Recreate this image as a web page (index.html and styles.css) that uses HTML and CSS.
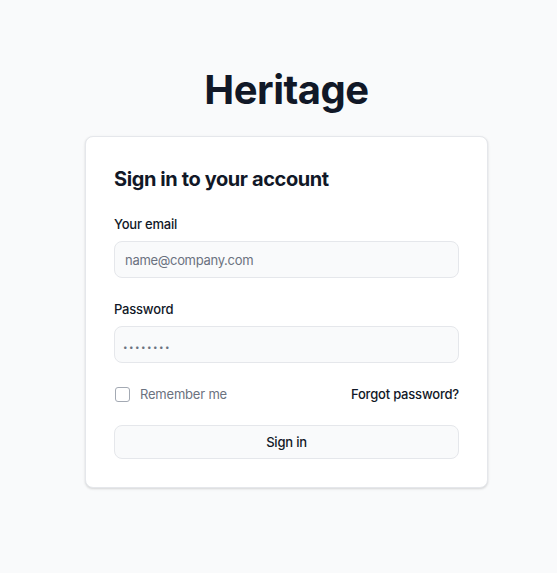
FILE: index.html
```html
<!DOCTYPE html>
<html lang="en">
<head>
<meta charset="utf-8">
<title>Heritage - Sign in</title>
<link rel="stylesheet" href="styles.css">
</head>
<body>
<main class="page">
  <h1 class="brand">Heritage</h1>
  <section class="card">
    <h2 class="card-title">Sign in to your account</h2>
    <form class="form">
      <div class="field">
        <label class="label" for="email">Your email</label>
        <input class="input" id="email" type="email" placeholder="name@company.com">
      </div>
      <div class="field">
        <label class="label" for="password">Password</label>
        <input class="input pw" id="password" type="password" placeholder="••••••••">
      </div>
      <div class="row">
        <label class="remember"><span class="checkbox"></span><span>Remember me</span></label>
        <a class="forgot" href="#">Forgot password?</a>
      </div>
      <button class="btn" type="button">Sign in</button>
    </form>
  </section>
</main>
</body>
</html>
```
FILE: styles.css
```css
* { box-sizing: border-box; }
html, body { margin: 0; padding: 0; }
body {
  background: #f9fafb;
  font-family: Inter, "Noto Sans", sans-serif;
  color: #111827;
  min-height: 573px;
}
.page {
  display: flex;
  flex-direction: column;
  align-items: center;
  padding-top: 68px;
  padding-left: 16px;
}
.brand {
  margin: 0 0 24px;
  font-size: 40px;
  line-height: 44px;
  font-weight: 700;
  letter-spacing: -0.5px;
  color: #111827;
}
.card {
  width: 403px;
  background: #fff;
  border: 1px solid #e5e7eb;
  border-radius: 8px;
  box-shadow: 0 1px 3px rgba(0,0,0,0.1), 0 1px 2px rgba(0,0,0,0.06);
  padding: 28px 28px 28px;
}
.card-title {
  margin: 0;
  font-size: 20px;
  line-height: 28px;
  font-weight: 700;
  letter-spacing: -0.4px;
  color: #111827;
}
.form {
  display: flex;
  flex-direction: column;
  margin-top: 21px;
}
.field { display: flex; flex-direction: column; margin-bottom: 21px; }
.label {
  font-size: 13px;
  line-height: 20px;
  font-weight: 500;
  letter-spacing: -0.2px;
  color: #111827;
  margin-bottom: 7px;
}
.input {
  height: 37px;
  border: 1px solid #e5e7eb;
  background: #f9fafb;
  border-radius: 8px;
  padding: 0 10px;
  font-family: inherit;
  font-size: 13px;
  letter-spacing: -0.3px;
  color: #111827;
  outline: none;
}
.input::placeholder { color: #6b7280; }
.pw { padding-left: 8px; }
.pw::placeholder { color: #6b7280; font-size: 8px; letter-spacing: 1.5px; }
.row {
  display: flex;
  justify-content: space-between;
  align-items: center;
  height: 20px;
  margin-top: 0;
}
.remember {
  display: flex;
  align-items: center;
  gap: 10px;
  font-size: 13px;
  letter-spacing: -0.2px;
  color: #6b7280;
}
.checkbox {
  width: 15px;
  height: 15px;
  border: 1px solid #a3a9b3;
  border-radius: 3px;
  background: #fff;
  margin-left: 1px;
}
.forgot {
  font-size: 13px;
  font-weight: 500;
  letter-spacing: -0.2px;
  color: #111827;
  text-decoration: none;
}
.btn {
  margin-top: 21px;
  height: 34px;
  border: 1px solid #e5e7eb;
  background: #f9fafb;
  border-radius: 8px;
  font-family: inherit;
  font-size: 13px;
  font-weight: 500;
  letter-spacing: -0.2px;
  color: #111827;
}
```
